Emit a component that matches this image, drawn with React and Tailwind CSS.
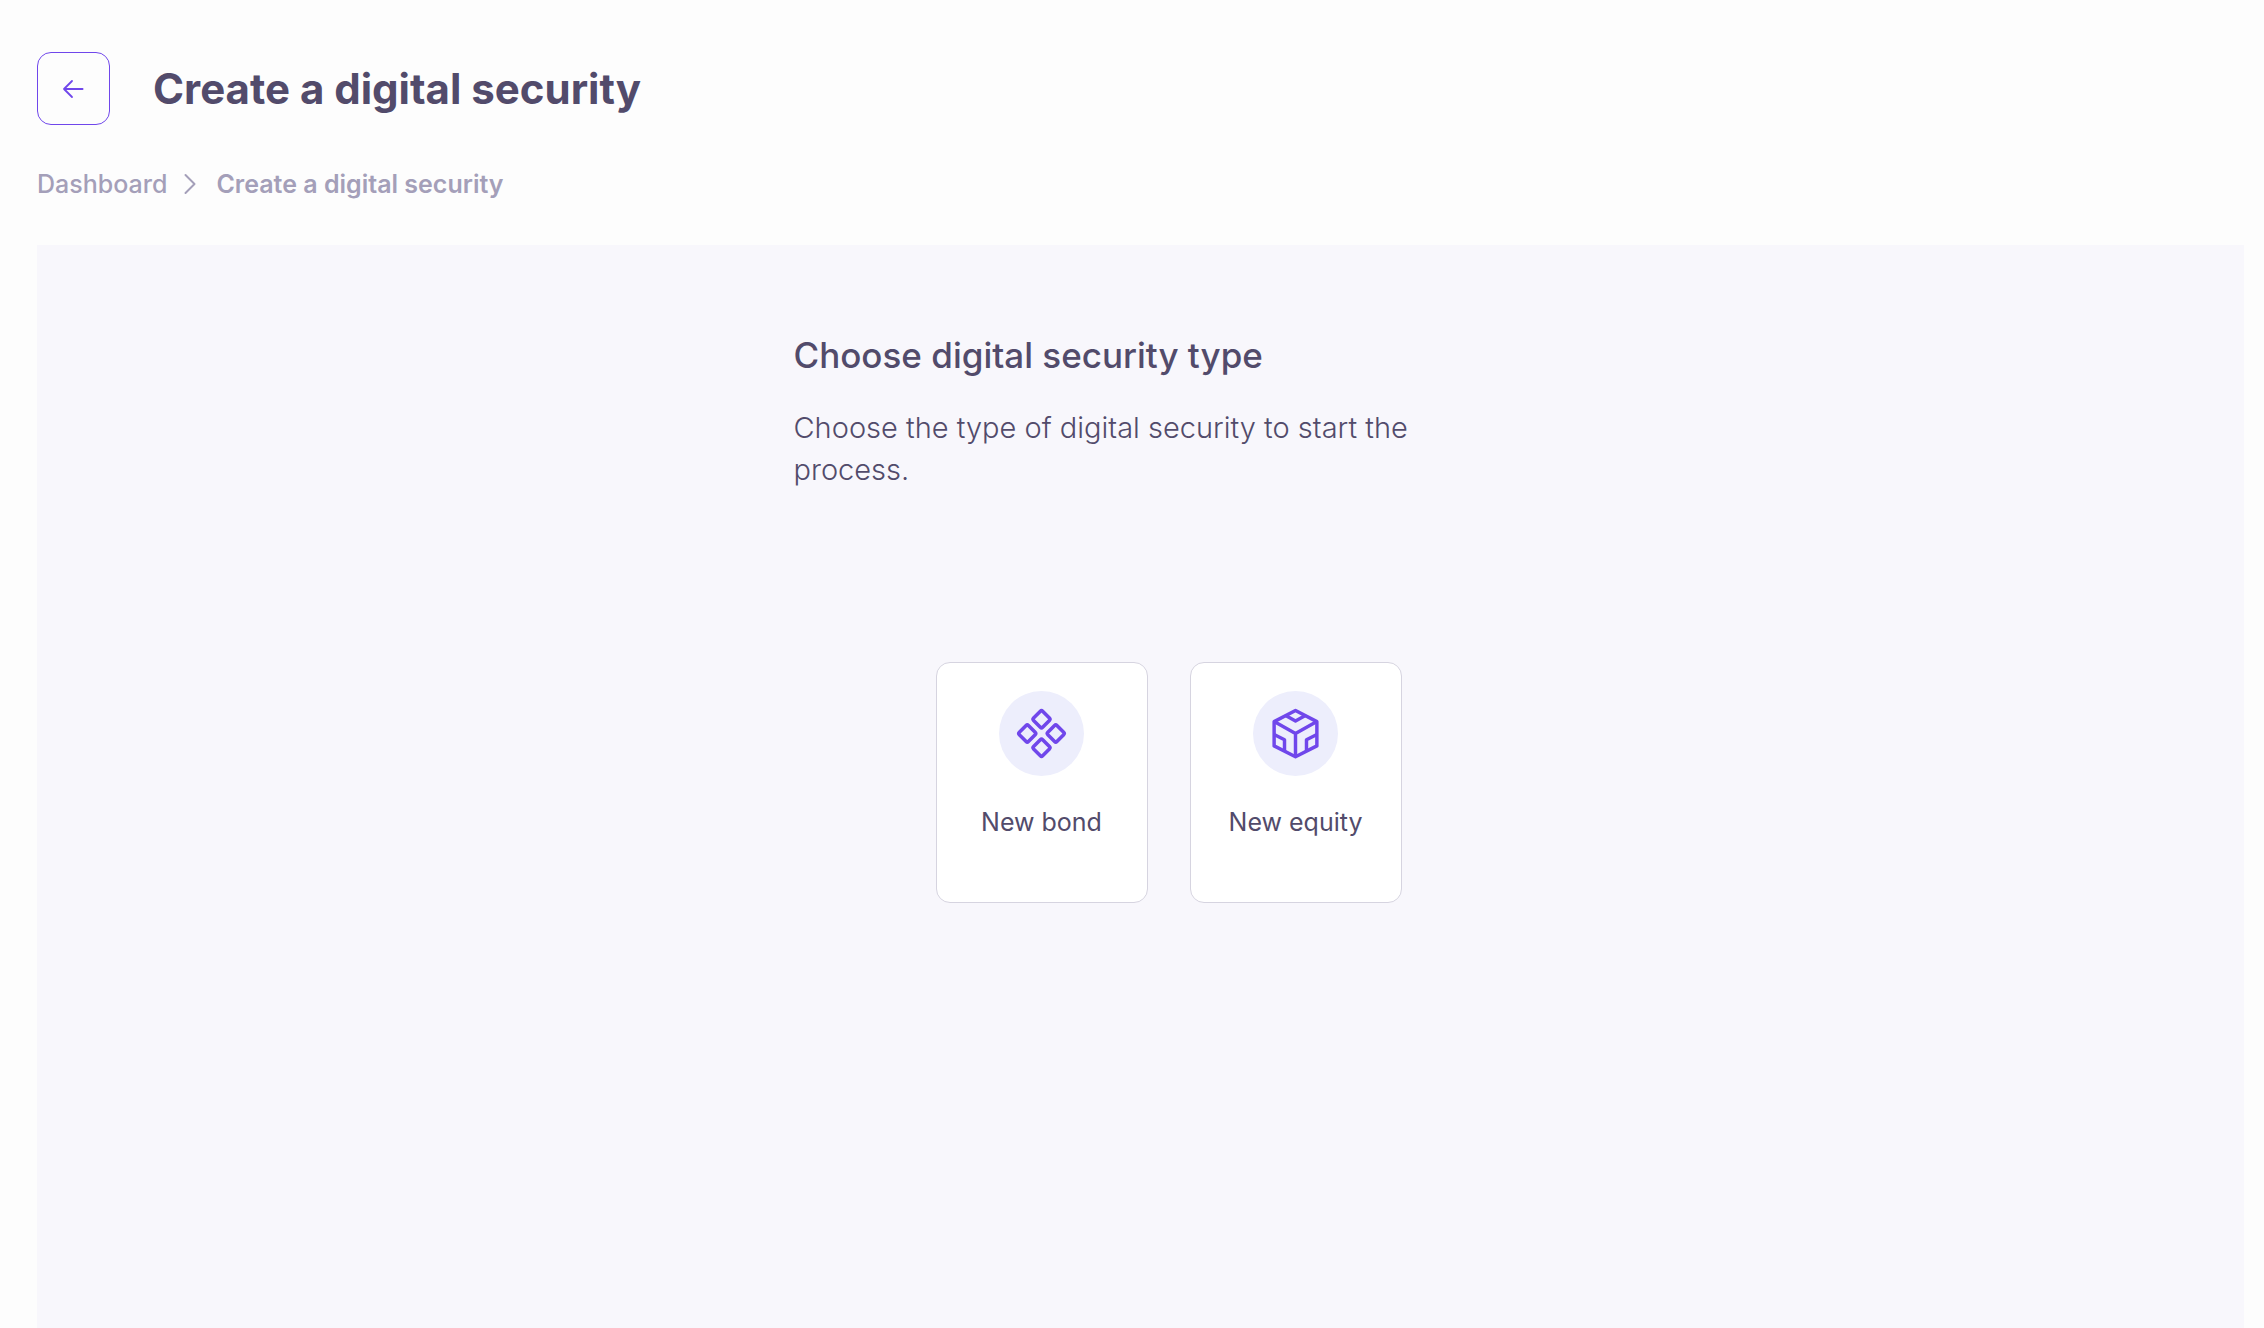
function BackArrow() {
  return (
    <svg className="h-7 w-7" viewBox="0 0 28 28" fill="none" stroke="currentColor" strokeWidth="1.8" strokeLinecap="round" strokeLinejoin="round" aria-hidden="true">
      <path d="M22.6 14H4M12 6l-8 8 8 8" />
    </svg>
  );
}

function Chevron() {
  return (
    <svg className="h-6 w-3" viewBox="0 0 12 24" fill="none" stroke="currentColor" strokeWidth="2" strokeLinecap="round" strokeLinejoin="round" aria-hidden="true">
      <path d="M1.5 3l9 9-9 9" />
    </svg>
  );
}

function Diamonds() {
  return (
    <svg className="size-[57px]" viewBox="-28 -28 56 56" fill="none" stroke="currentColor" strokeWidth="3.5" aria-hidden="true">
      <g transform="rotate(45)">
        <rect x="-16.2" y="-16.2" width="12.6" height="12.6" rx="1.6" />
        <rect x="3.6" y="-16.2" width="12.6" height="12.6" rx="1.6" />
        <rect x="-16.2" y="3.6" width="12.6" height="12.6" rx="1.6" />
        <rect x="3.6" y="3.6" width="12.6" height="12.6" rx="1.6" />
      </g>
    </svg>
  );
}

function Cube() {
  return (
    <svg className="size-[57px]" viewBox="-28 -28 56 56" fill="none" stroke="currentColor" strokeWidth="3.4" strokeLinejoin="round" aria-hidden="true">
      <path d="M0-22.6L21-11.7V12.2L0 22.8-21 12.2V-11.7z" />
      <path d="M-21-11.7L0 0 21-11.7M0 0V22.8" />
      <path d="M-9.7-17.6L0-12.2 9.7-17.6M-21 1L-10.8 6.2V17.5M21 1L10.8 6.2V17.5" />
    </svg>
  );
}

function TypeCard({ icon, label }) {
  return (
    <button type="button" className="flex w-53 flex-col items-center rounded-[14px] border border-[#d6d4e0] bg-white pt-7 pb-[62px]">
      <span className="flex size-[85px] items-center justify-center rounded-full bg-[#edeefc] text-[#7047eb]">{icon}</span>
      <span className="mt-7 text-[25px] leading-9">{label}</span>
    </button>
  );
}

export default function App() {
  return (
    <div className="flex min-h-screen flex-col bg-[#fdfdfd] pt-[52px] pr-5 pl-[37px] font-['Inter',sans-serif] text-[#524b6b]">
      <header className="flex items-center gap-[43px]">
        <button type="button" aria-label="Back" className="flex size-[73px] items-center justify-center rounded-[14px] border border-[#7047eb] text-[#7047eb]">
          <BackArrow />
        </button>
        <h1 className="text-[42px] leading-[51px] font-bold">Create a digital security</h1>
      </header>
      <nav aria-label="Breadcrumb" className="mt-[39px] flex items-center text-[25px] leading-10 text-[#a49fb9]">
        <a href="#" className="font-medium">Dashboard</a>
        <span className="mr-5 ml-[17px]"><Chevron /></span>
        <span className="font-semibold" aria-current="page">Create a digital security</span>
      </nav>
      <main className="mt-[41px] flex-1 bg-[#f8f7fc] px-8 pt-[86px]">
        <div className="mx-auto max-w-[694px]">
          <h2 className="text-[35px] leading-12 font-medium">Choose digital security type</h2>
          <p className="mt-7 text-[29px] leading-[42px] font-light">Choose the type of digital security to start the process.</p>
          <div className="mt-[171px] flex justify-center gap-[42px] pl-14">
            <TypeCard label="New bond" icon={<Diamonds />} />
            <TypeCard label="New equity" icon={<Cube />} />
          </div>
        </div>
      </main>
    </div>
  );
}
